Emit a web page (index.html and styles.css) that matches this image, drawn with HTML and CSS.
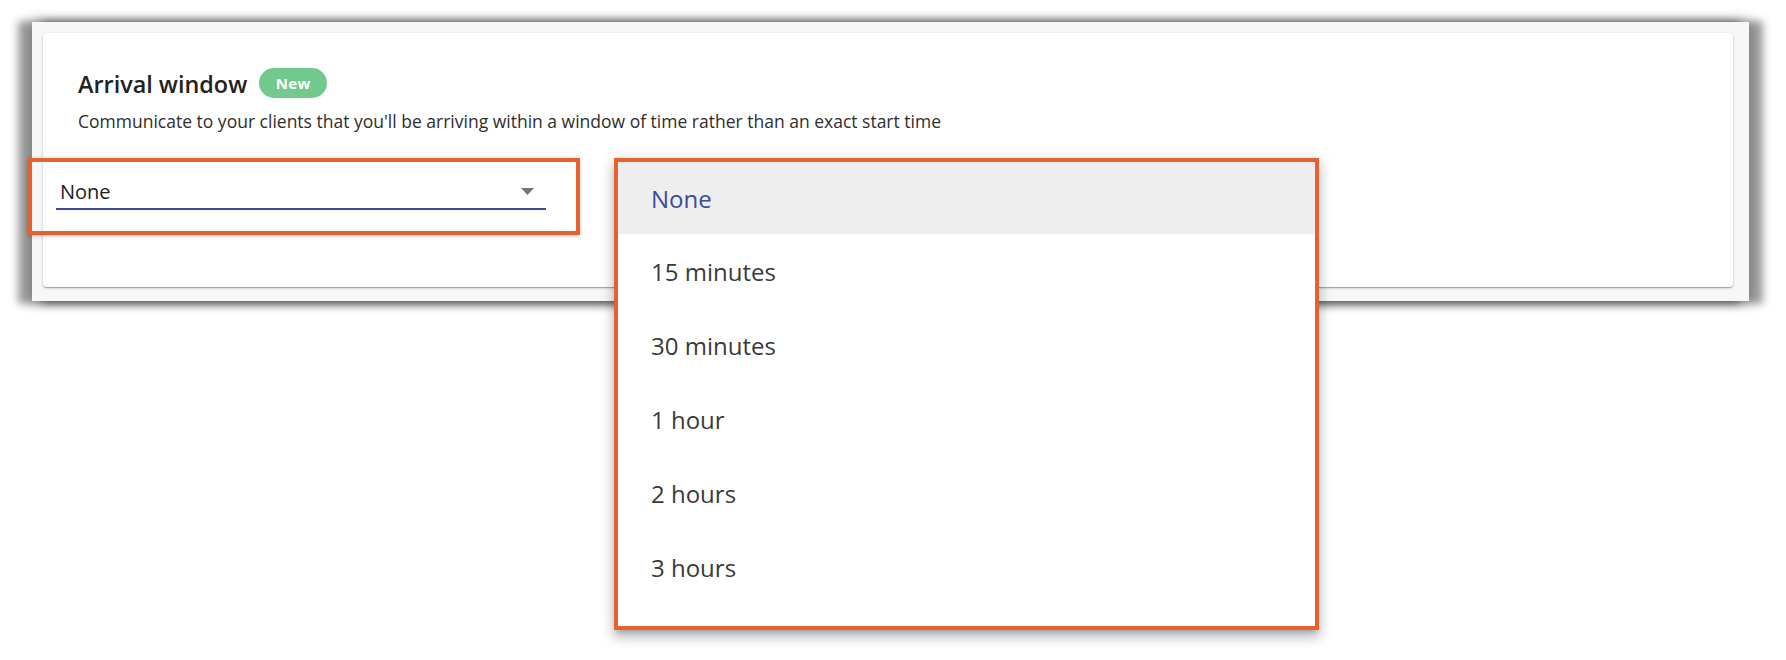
FILE: index.html
```html
<!DOCTYPE html>
<html lang="en">
<head>
<meta charset="utf-8">
<title>Arrival window</title>
<link rel="stylesheet" href="styles.css">
</head>
<body>
  <div class="frame">
    <section class="card">
      <div class="text-block">
        <div class="title-row">
          <h2 class="title">Arrival window</h2>
          <span class="badge">New</span>
        </div>
        <p class="desc">Communicate to your clients that you'll be arriving within a window of time rather than an exact start time</p>
      </div>
      <div class="select">
        <span class="select-value">None</span>
        <svg class="select-arrow" width="13" height="7" viewBox="0 0 13 7"><path d="M0 0 L13 0 L6.5 7 Z" fill="#757575"/></svg>
        <span class="highlight"></span>
      </div>
    </section>
  </div>

  <ul class="menu">
    <li class="menu-item selected">None</li>
    <li class="menu-item">15 minutes</li>
    <li class="menu-item">30 minutes</li>
    <li class="menu-item">1 hour</li>
    <li class="menu-item">2 hours</li>
    <li class="menu-item">3 hours</li>
  </ul>
</body>
</html>
```

FILE: styles.css
```css
html, body {
  margin: 0;
  padding: 0;
  background: #ffffff;
}

body {
  width: 1786px;
  height: 660px;
  position: relative;
  overflow: hidden;
  font-family: "Open Sans", "Noto Sans", sans-serif;
  padding-top: 22px;
  box-sizing: border-box;
}

.frame {
  margin-left: 32px;
  width: 1717px;
  height: 279px;
  box-sizing: border-box;
  padding: 11px 16px 14px 11px;
  background: #f6f7f9;
  box-shadow:
    -12px 1px 8px 2px rgba(0, 0, 0, 0.38),
    12px 1px 8px 2px rgba(0, 0, 0, 0.38),
    0 0 12px 2px rgba(0, 0, 0, 0.22);
}

.card {
  height: 254px;
  box-sizing: border-box;
  background: #ffffff;
  border-radius: 4px;
  padding: 35px 0 0 13px;
  box-shadow:
    0 1px 3px rgba(0, 0, 0, 0.2),
    0 1px 1px rgba(0, 0, 0, 0.14),
    0 2px 1px -1px rgba(0, 0, 0, 0.12);
}

.text-block {
  padding-left: 22px;
}

.title-row {
  display: flex;
  align-items: center;
  gap: 12px;
  height: 30px;
}

.title {
  margin: 0;
  font-size: 23.4px;
  line-height: 30px;
  font-weight: 600;
  color: #222222;
  position: relative;
  top: 1px;
}

.badge {
  width: 68px;
  height: 30px;
  border-radius: 15px;
  background: #72c98e;
  color: #ffffff;
  font-weight: 700;
  font-size: 15px;
  line-height: 30px;
  text-align: center;
  letter-spacing: 0.3px;
}

.desc {
  margin: 11px 0 0;
  font-size: 17.5px;
  line-height: 24px;
  color: #2e2e2e;
}

.select {
  position: relative;
  margin-top: 45px;
  width: 490px;
  display: flex;
  align-items: center;
  padding: 0 0 2px 4px;
  box-sizing: border-box;
  border-bottom: 2px solid #3d4a9c;
}

.select-value {
  font-size: 20px;
  line-height: 28px;
  color: #212121;
}

.select-arrow {
  margin-left: auto;
  margin-right: 12px;
  margin-bottom: 2px;
}

.highlight {
  position: absolute;
  top: -20px;
  left: -28px;
  right: -34px;
  bottom: -27px;
  border: 4px solid #e5622f;
  box-shadow: 0 1px 4px rgba(0, 0, 0, 0.25);
}

.menu {
  position: absolute;
  left: 614px;
  top: 158px;
  width: 705px;
  height: 472px;
  box-sizing: border-box;
  margin: 0;
  padding: 0 0 22px;
  list-style: none;
  background: #ffffff;
  border: 4px solid #e5622f;
  box-shadow:
    0 5px 5px -3px rgba(0, 0, 0, 0.2),
    0 8px 10px 1px rgba(0, 0, 0, 0.14),
    0 3px 14px 2px rgba(0, 0, 0, 0.12);
}

.menu-item {
  height: 74px;
  display: flex;
  align-items: center;
  padding-left: 33px;
  font-size: 24px;
  color: #3a3a3a;
}

.menu-item:first-child {
  height: 72px;
}

.menu-item.selected {
  background: #eeeeee;
  color: #3c4a9e;
}
```
